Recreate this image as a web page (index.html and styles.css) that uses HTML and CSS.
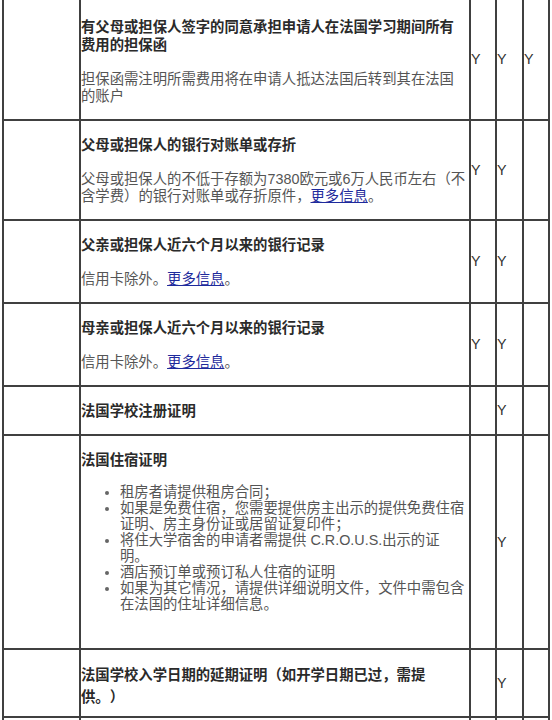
FILE: index.html
```html
<!DOCTYPE html>
<html lang="zh-CN">
<head>
<meta charset="utf-8">
<title>材料清单</title>
<link rel="stylesheet" href="styles.css">
</head>
<body>
<table class="req">
  <tbody>
    <tr class="row-first">
      <td class="blank"></td>
      <td class="item">
        <p class="title">有父母或担保人签字的同意承担申请人在法国学习期间所有费用的担保函</p>
        <p class="desc">担保函需注明所需费用将在申请人抵达法国后转到其在法国的账户</p>
      </td>
      <td class="mark m1">Y</td>
      <td class="mark m2">Y</td>
      <td class="mark m3">Y</td>
    </tr>
    <tr>
      <td class="blank"></td>
      <td class="item">
        <p class="title">父母或担保人的银行对账单或存折</p>
        <p class="desc">父母或担保人的不低于存额为7380欧元或6万人民币左右<span class="pc">（</span>不含学费<span class="pc">）</span>的银行对账单或存折原件<span class="pc">，</span><a class="more" href="#">更多信息</a>。</p>
      </td>
      <td class="mark m1">Y</td>
      <td class="mark m2">Y</td>
      <td class="mark m3"></td>
    </tr>
    <tr>
      <td class="blank"></td>
      <td class="item">
        <p class="title">父亲或担保人近六个月以来的银行记录</p>
        <p class="desc">信用卡除外。<a class="more" href="#">更多信息</a>。</p>
      </td>
      <td class="mark m1">Y</td>
      <td class="mark m2">Y</td>
      <td class="mark m3"></td>
    </tr>
    <tr>
      <td class="blank"></td>
      <td class="item">
        <p class="title">母亲或担保人近六个月以来的银行记录</p>
        <p class="desc">信用卡除外。<a class="more" href="#">更多信息</a>。</p>
      </td>
      <td class="mark m1">Y</td>
      <td class="mark m2">Y</td>
      <td class="mark m3"></td>
    </tr>
    <tr>
      <td class="blank"></td>
      <td class="item">
        <p class="title">法国学校注册证明</p>
      </td>
      <td class="mark m1"></td>
      <td class="mark m2">Y</td>
      <td class="mark m3"></td>
    </tr>
    <tr>
      <td class="blank"></td>
      <td class="item">
        <p class="title">法国住宿证明</p>
        <ul class="list">
          <li>租房者请提供租房合同<span class="pc">；</span></li>
          <li>如果是免费住宿<span class="pc">，</span>您需要提供房主出示的提供免费住宿证明<span class="pc">、</span>房主身份证或居留证复印件<span class="pc">；</span></li>
          <li>将住大学宿舍的申请者需提供 C.R.O.U.S.出示的证明。</li>
          <li>酒店预订单或预订私人住宿的证明</li>
          <li>如果为其它情况<span class="pc">，</span>请提供详细说明文件<span class="pc">，</span>文件中需包含在法国的住址详细信息。</li>
        </ul>
      </td>
      <td class="mark m1"></td>
      <td class="mark m2">Y</td>
      <td class="mark m3"></td>
    </tr>
    <tr class="row-delay">
      <td class="blank"></td>
      <td class="item">
        <p class="title">法国学校入学日期的延期证明<span class="pc">（</span>如开学日期已过<span class="pc">，</span>需提供。<span class="pc">）</span></p>
      </td>
      <td class="mark m1"></td>
      <td class="mark m2">Y</td>
      <td class="mark m3"></td>
    </tr>
    <tr class="row-tail">
      <td class="blank"></td>
      <td class="item"></td>
      <td class="mark m1"></td>
      <td class="mark m2"></td>
      <td class="mark m3"></td>
    </tr>
  </tbody>
</table>
</body>
</html>
```

FILE: styles.css
```css
html,
body {
  margin: 0;
  background: #ffffff;
}

body {
  font-family: "Liberation Sans", "Noto Sans CJK SC", sans-serif;
  font-size: 14.35px;
  color: #555555;
  overflow: hidden;
  text-spacing-trim: space-all;
  text-autospace: no-autospace;
}

.req {
  border-collapse: separate;
  border-spacing: 0;
  table-layout: fixed;
  width: 548px;
  margin-left: 2px;
  border-left: 2px solid #404040;
}

.req td {
  box-sizing: border-box;
  padding: 0;
  border-right: 2px solid #404040;
  border-bottom: 2px solid #404040;
}

.blank {
  width: 77px;
}

.item {
  width: 390px;
  vertical-align: top;
}

.req .item {
  padding: 15px 2px 14px 0;
}

.req .row-first .item {
  padding-top: 18px;
}

.req .row-delay .item {
  padding: 14px 2px 8px 0;
}

.mark {
  vertical-align: middle;
  color: #333333;
  line-height: 17px;
}

.m1 { width: 26px; }
.m2 { width: 27px; }
.m3 { width: 26px; }

.title {
  margin: 0;
  font-weight: 700;
  color: #2a2a2a;
  line-height: 18px;
}

.row-delay .title {
  line-height: 22px;
}

.desc {
  margin: 17px 0 0;
  line-height: 17px;
}

.list {
  margin: 15px 0 22px;
  padding: 0 1px 0 39px;
  line-height: 16px;
}

.list li::marker {
  color: #666666;
}

.pc {
  font-family: "Liberation Sans", "Noto Sans CJK TC", sans-serif;
}

.more {
  color: #1e2a9c;
  text-decoration: underline;
}

.row-tail td {
  height: 40px;
}
```
